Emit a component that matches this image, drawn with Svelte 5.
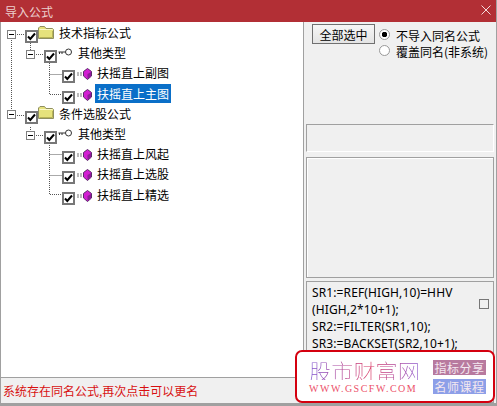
<script>
  const rows = [
    { level: 0, icon: "folder", text: "技术指标公式", open: true },
    { level: 1, icon: "key", text: "其他类型", open: true },
    { level: 2, icon: "gem", text: "扶摇直上副图" },
    { level: 2, icon: "gem", text: "扶摇直上主图", selected: true },
    { level: 0, icon: "folder", text: "条件选股公式", open: true },
    { level: 1, icon: "key", text: "其他类型", open: true },
    { level: 2, icon: "gem", text: "扶摇直上风起" },
    { level: 2, icon: "gem", text: "扶摇直上选股" },
    { level: 2, icon: "gem", text: "扶摇直上精选" },
  ];
</script>

<div class="window">
  <header class="titlebar">
    <span>导入公式</span>
    <svg class="close" width="10" height="10" viewBox="0 0 10 10">
      <path d="M0.5 0.5L9.5 9.5M9.5 0.5L0.5 9.5" stroke="#f3dcdc" fill="none" />
    </svg>
  </header>

  <div class="body">
    <div class="left">
      <div class="tree">
        <svg class="lines" width="120" height="190">
          <g stroke="#555" stroke-dasharray="1 1" fill="none">
            <path d="M11.5 18V88M17 12.5H25M30.5 21V28M36 32.5H44M49.5 41V72.5H62M49.5 52.5H62" />
            <path d="M17 93.5H25M30.5 105V110M36 113.5H44M49.5 121V172.5H62M49.5 132.5H62M49.5 153.5H62" />
          </g>
        </svg>
        {#each rows as row}
          <div class="row level{row.level}">
            {#if row.open}
              <span class="expander"></span>
            {/if}
            <span class="check">
              <svg width="9" height="9" viewBox="0 0 9 9">
                <path d="M1 4.5L3.3 7L8 1.5" stroke="#000" stroke-width="2" fill="none" />
              </svg>
            </span>
            {#if row.icon === "folder"}
              <svg class="icon folder" width="16" height="13" viewBox="0 0 16 13">
                <path d="M0.5 12.5V2L2 0.5H6.5L8 2.5H14.5L15.5 3.5V12.5Z" fill="#e6e27c" stroke="#8f8f60" />
                <path d="M1.5 3.5H14.5" stroke="#fbf9c8" />
                <path d="M1.5 11.5H14.5V5" stroke="#b8b458" fill="none" />
              </svg>
            {:else if row.icon === "key"}
              <svg class="icon key" width="15" height="8" viewBox="0 0 15 8">
                <circle cx="10.5" cy="4" r="3" fill="#fff" stroke="#333" />
                <path d="M0.5 4H7.5M1.5 4V6M4 4V6" stroke="#333" fill="none" />
              </svg>
            {:else}
              <svg class="icon gem" width="16" height="12" viewBox="0 0 16 12">
                <path d="M1 5H7M1 7H7" stroke="#777" stroke-dasharray="2 1" />
                <path d="M11.5 0.5L15.5 3.5V8L11.5 11.5L7.5 8V3.5Z" fill="#d21ed2" stroke="#5a2a6a" />
                <path d="M11.5 6L15 4V8L11.5 11Z" fill="#8e1a9a" />
              </svg>
            {/if}
            <span class="label" class:selected={row.selected}>{row.text}</span>
          </div>
        {/each}
      </div>
      <div class="status">系统存在同名公式,再次点击可以更名</div>
    </div>

    <div class="right">
      <div class="options">
        <button class="all">全部选中</button>
        <div class="radios">
          <label><span class="radio on"></span>不导入同名公式</label>
          <label><span class="radio"></span>覆盖同名(非系统)</label>
        </div>
      </div>
      <div class="box small"></div>
      <div class="box large"></div>
      <div class="box code">
        <p>SR1:=REF(HIGH,10)=HHV<br />(HIGH,2*10+1);<br />SR2:=FILTER(SR1,10);<br />SR3:=BACKSET(SR2,10+1);</p>
        <span class="square"></span>
      </div>
    </div>
  </div>

  <div class="stamp">
    <div class="brand">
      <div class="brand-name">股市财富网</div>
      <div class="brand-url">WWW.GSCFW.COM</div>
    </div>
    <div class="tags">
      <span class="tag pink">指标分享</span>
      <span class="tag blue">名师课程</span>
    </div>
  </div>
</div>

<style>
  :global(body) {
    margin: 0;
    background: #f0f0f0;
  }

  .window {
    position: relative;
    width: 497px;
    height: 406px;
    overflow: hidden;
    display: flex;
    flex-direction: column;
    font-family: "Noto Sans CJK SC", sans-serif;
    font-size: 12px;
    color: #000;
    background: #f0f0f0;
    box-sizing: border-box;
    border-bottom: 3px solid #a0a0a0;
    border-right: 1px solid #a0a0a0;
  }

  .titlebar {
    height: 22px;
    flex: none;
    background: #b22f35;
    color: #eccfcf;
    display: flex;
    align-items: center;
    justify-content: space-between;
    padding: 0 5px 0 5px;
  }

  .close {
    margin-top: -2px;
  }

  .body {
    flex: 1;
    min-height: 0;
    display: flex;
  }

  .left {
    width: 304px;
    flex: none;
    display: flex;
    flex-direction: column;
    box-sizing: border-box;
    border-left: 1px solid #a0a0a0;
    border-right: 1px solid #a0a0a0;
  }

  .tree {
    position: relative;
    flex: 1;
    background: #fff;
    border-bottom: 1px solid #a0a0a0;
  }

  .lines {
    position: absolute;
    left: -1px;
    top: 0;
  }

  .row {
    position: relative;
    display: flex;
    align-items: center;
    height: 20.2px;
    box-sizing: border-box;
  }

  .level0 {
    padding-left: 6px;
  }

  .level1 {
    padding-left: 25px;
  }

  .level2 {
    padding-left: 61px;
  }

  .expander {
    width: 9px;
    height: 9px;
    box-sizing: border-box;
    margin-right: 9px;
    margin-top: 4px;
    border: 1px solid #808080;
    background: linear-gradient(#000, #000) center / 5px 1px no-repeat #fff;
  }

  .check {
    width: 13px;
    height: 13px;
    box-sizing: border-box;
    border: 2px solid #777;
    background: #fff;
    margin-top: 9px;
    display: flex;
    align-items: center;
    justify-content: center;
    flex: none;
  }

  .icon {
    flex: none;
    margin-left: 1px;
  }

  .folder {
    margin-left: 0;
  }

  .gem {
    margin-top: 4px;
  }

  .label {
    margin-left: 3px;
    margin-top: 1px;
    padding: 1px 2px;
    line-height: 17px;
  }

  .selected {
    background: #0a6fc8;
    color: #fff;
  }

  .status {
    height: 25px;
    flex: none;
    color: #d81010;
    padding-left: 2px;
    line-height: 26px;
  }

  .right {
    flex: 1;
    display: flex;
    flex-direction: column;
    padding: 0 2px;
    min-width: 0;
  }

  .options {
    display: flex;
    height: 102px;
    flex: none;
    padding: 2px 0 0 6px;
    box-sizing: border-box;
  }

  .all {
    width: 63px;
    height: 20px;
    padding: 0;
    font: inherit;
    border: 1px solid #707070;
    background: linear-gradient(#f6f6f6, #e4e4e4);
  }

  .radios {
    display: flex;
    flex-direction: column;
    margin-left: 4px;
    padding-top: 4px;
  }

  .radios label {
    display: flex;
    align-items: center;
    height: 16px;
    line-height: 16px;
    gap: 6px;
  }

  .radio {
    width: 11px;
    height: 11px;
    box-sizing: border-box;
    border-radius: 50%;
    border: 1px solid #999;
    background: #fff;
    margin-top: -3px;
  }

  .radio.on {
    background: radial-gradient(circle, #000 2.5px, #fff 3px);
  }

  .box {
    border: 1px solid #a0a0a0;
    box-sizing: border-box;
  }

  .small {
    height: 28px;
    border-right-color: #fff;
    border-bottom-color: #fff;
  }

  .large {
    height: 121px;
    margin-top: 5px;
    box-shadow: inset 1px 1px 0 #fff;
  }

  .code {
    flex: 1;
    margin-top: 3px;
    display: flex;
    justify-content: space-between;
    align-items: flex-start;
    padding: 2px 4px 0 5px;
    overflow: hidden;
  }

  .code p {
    margin: 0;
    line-height: 17px;
    letter-spacing: 0.12px;
    font-family: "Noto Sans", sans-serif;
  }

  .square {
    width: 10px;
    height: 10px;
    box-sizing: border-box;
    border: 1px solid #777;
    margin-top: 15px;
    flex: none;
  }

  .stamp {
    position: absolute;
    left: 295px;
    top: 350px;
    width: 200px;
    height: 53px;
    box-sizing: border-box;
    background: #fff;
    border: 2px solid #d4000f;
    border-radius: 7px;
    display: flex;
    justify-content: space-between;
    padding: 8px 7px 0 12px;
  }

  .brand-name {
    font-size: 22px;
    line-height: 20px;
    font-weight: 100;
    letter-spacing: 0.2px;
    background: linear-gradient(90deg, #7a50d0, #d8305e 55%, #8a58d0);
    background-clip: text;
    -webkit-background-clip: text;
    color: transparent;
  }

  .brand-url {
    font-family: "Liberation Serif", serif;
    font-size: 10px;
    line-height: 10px;
    letter-spacing: 1.5px;
    color: #ec5068;
    margin-top: 4px;
    white-space: nowrap;
  }

  .tags {
    display: flex;
    flex-direction: column;
    gap: 4px;
  }

  .tag {
    width: 53px;
    height: 15px;
    line-height: 15px;
    text-align: center;
    font-size: 12px;
    letter-spacing: 0.5px;
    color: #f4e8f0;
    white-space: nowrap;
  }

  .pink {
    background: #b87a9f;
  }

  .blue {
    background: #8d9fe8;
  }
</style>
